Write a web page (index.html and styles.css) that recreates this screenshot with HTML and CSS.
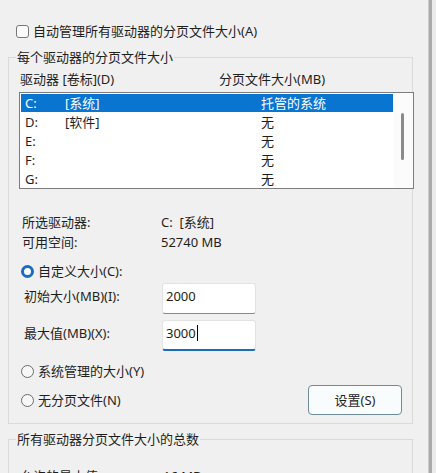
FILE: index.html
```html
<!DOCTYPE html>
<html lang="zh-CN">
<head>
<meta charset="utf-8">
<link rel="stylesheet" href="styles.css">
</head>
<body>
<div class="window">
  <div class="main">
    <label class="check-row">
      <span class="checkbox"></span>
      <span>自动管理所有驱动器的分页文件大小(A)</span>
    </label>

    <fieldset class="group group-drives">
      <legend>每个驱动器的分页文件大小</legend>
      <div class="col-head">
        <span class="col-drive">驱动器 [卷标](D)</span>
        <span>分页文件大小(MB)</span>
      </div>
      <div class="listbox">
        <div class="rows">
          <div class="row selected"><span class="c-letter">C:</span><span class="c-label">[系统]</span><span>托管的系统</span></div>
          <div class="row"><span class="c-letter">D:</span><span class="c-label">[软件]</span><span>无</span></div>
          <div class="row"><span class="c-letter">E:</span><span class="c-label"></span><span>无</span></div>
          <div class="row"><span class="c-letter">F:</span><span class="c-label"></span><span>无</span></div>
          <div class="row"><span class="c-letter">G:</span><span class="c-label"></span><span>无</span></div>
        </div>
        <div class="scrollbar"><div class="thumb"></div></div>
      </div>

      <div class="info">
        <span>所选驱动器:</span><span>C:&nbsp;&nbsp;[系统]</span>
        <span>可用空间:</span><span>52740 MB</span>
      </div>

      <div class="radio-row radio-custom">
        <span class="radio checked"></span>
        <span>自定义大小(C):</span>
      </div>

      <div class="field-row">
        <span class="field-label">初始大小(MB)(I):</span>
        <div class="textbox">2000</div>
      </div>
      <div class="field-row field-row-2">
        <span class="field-label">最大值(MB)(X):</span>
        <div class="textbox focused">3000<span class="caret"></span></div>
      </div>

      <div class="radio-row radio-system">
        <span class="radio"></span>
        <span>系统管理的大小(Y)</span>
      </div>

      <div class="last-row">
        <div class="radio-row">
          <span class="radio"></span>
          <span>无分页文件(N)</span>
        </div>
        <button class="btn">设置(S)</button>
      </div>
    </fieldset>

    <fieldset class="group group-total">
      <legend>所有驱动器分页文件大小的总数</legend>
      <div class="info info-total">
        <span>允许的最小值:</span><span>16 MB</span>
      </div>
    </fieldset>
  </div>
  <div class="edge"></div>
</div>
</body>
</html>
```

FILE: styles.css
```css
* { box-sizing: border-box; }

html, body {
  margin: 0;
  padding: 0;
  background: #ebebeb;
}

body {
  font-family: "Noto Sans", "Noto Sans CJK SC", sans-serif;
  font-size: 13px;
  line-height: 18px;
  color: #1e1e1e;
}

.window {
  display: flex;
  width: 436px;
  height: 473px;
  overflow: hidden;
}

.main {
  width: 428px;
  flex: none;
  background: #f0f0f0;
  padding-top: 22px;
}

.edge {
  width: 4px;
  flex: none;
  background: #aaaaaa;
  border-left: 1px solid #cbcbcb;
}

.check-row {
  display: flex;
  align-items: center;
  gap: 4px;
  padding-left: 16px;
  height: 18px;
}

.checkbox {
  width: 13px;
  height: 13px;
  border: 1px solid #777;
  border-radius: 3px;
  background: #fbfbfb;
  flex: none;
}

.group {
  margin: 0 15px 0 8px;
  border: 1px solid #dadada;
  padding: 0 0 0 10px;
  min-width: 0;
}

.group legend {
  padding: 0 1px;
  margin-left: -3px;
  line-height: 18px;
}

.group-drives {
  margin-top: 8px;
  padding-bottom: 8px;
}

.col-head {
  display: flex;
  margin-top: 4px;
  padding-left: 1px;
}

.col-drive {
  width: 199px;
}

.listbox {
  margin-top: 4px;
  width: 395px;
  height: 97px;
  border: 1px solid #7d7d7d;
  background: #fff;
  display: flex;
  overflow: hidden;
}

.rows {
  width: 374px;
  padding-top: 1px;
}

.row {
  display: flex;
  height: 19px;
  line-height: 19px;
  margin: 0 1px;
  padding-left: 4px;
}

.row.selected {
  background: #0a74d1;
  color: #fff;
  height: 18px;
  margin-bottom: 1px;
}

.c-letter { width: 40px; }
.c-label { width: 196px; }

.scrollbar {
  width: 19px;
  background: #fbfbfb;
  padding: 20px 0 0 7px;
}

.thumb {
  width: 3px;
  height: 47px;
  border-radius: 2px;
  background: #8a8a8a;
}

.info {
  display: grid;
  grid-template-columns: 139px auto;
  row-gap: 2px;
  margin-top: 24px;
  padding-left: 3px;
}

.radio-row {
  display: flex;
  align-items: center;
  gap: 4px;
  height: 18px;
  padding-left: 2px;
}

.radio {
  width: 13px;
  height: 13px;
  border-radius: 50%;
  border: 1px solid #6c6c6c;
  background: #f7f7f7;
  flex: none;
}

.radio.checked {
  border: 3px solid #1a6cc0;
  background: #ffffff;
}

.radio-custom { margin-top: 11px; }

.field-row {
  display: flex;
  align-items: flex-start;
  margin-top: 3px;
}

.field-row-2 { margin-top: 6px; }

.field-label {
  width: 143px;
  padding-left: 5px;
  margin-top: 4px;
}

.textbox {
  width: 94px;
  height: 31px;
  background: #fff;
  border: 1px solid #e3e3e3;
  border-bottom: 1px solid #8a8a8a;
  border-radius: 3px;
  padding: 3px 0 0 3px;
  display: flex;
  align-items: flex-start;
}

.textbox.focused {
  border-bottom: 2px solid #1a6cc0;
}

.caret {
  width: 1px;
  height: 16px;
  background: #000;
  margin-top: 1px;
  margin-left: 1px;
}

.radio-system { margin-top: 11px; }

.last-row {
  display: flex;
  align-items: center;
  justify-content: space-between;
  margin-top: 5px;
  padding-right: 10px;
}

.btn {
  font: inherit;
  color: inherit;
  width: 94px;
  height: 30px;
  border: 1px solid #6e8c9c;
  border-radius: 4px;
  background: #f8fcfd;
  padding: 0;
}

.group-total {
  margin-top: 6px;
  height: 60px;
}

.info-total {
  margin-top: 19px;
  padding-left: 1px;
  grid-template-columns: 143px auto;
}
```
